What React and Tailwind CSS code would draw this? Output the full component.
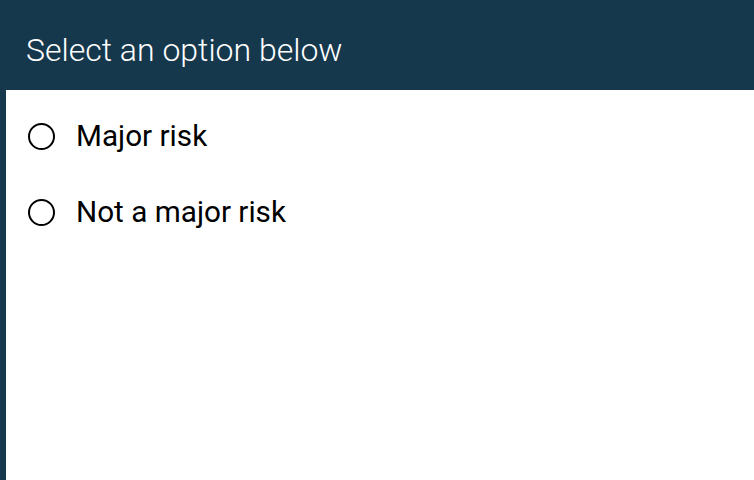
export default function App() {
  const options = ["Major risk", "Not a major risk"];
  return (
    <div className="w-[754px] h-[480px] bg-[#16384d] flex flex-col" style={{ fontFamily: "Roboto, sans-serif" }}>
      <div className="h-[90px] flex items-center pl-[26px] shrink-0">
        <h1 className="text-white text-[32px] font-light leading-none pt-[10px]">Select an option below</h1>
      </div>
      <div className="flex-1 bg-white ml-[6px] pt-[31px] flex flex-col gap-[46px]">
        {options.map((o) => (
          <label key={o} className="flex items-center gap-[21px] pl-[22px] h-[30px]">
            <span className="w-[27px] h-[27px] rounded-full border-2 border-black shrink-0" />
            <span className="text-black text-[29.7px] leading-none">{o}</span>
          </label>
        ))}
      </div>
    </div>
  );
}
